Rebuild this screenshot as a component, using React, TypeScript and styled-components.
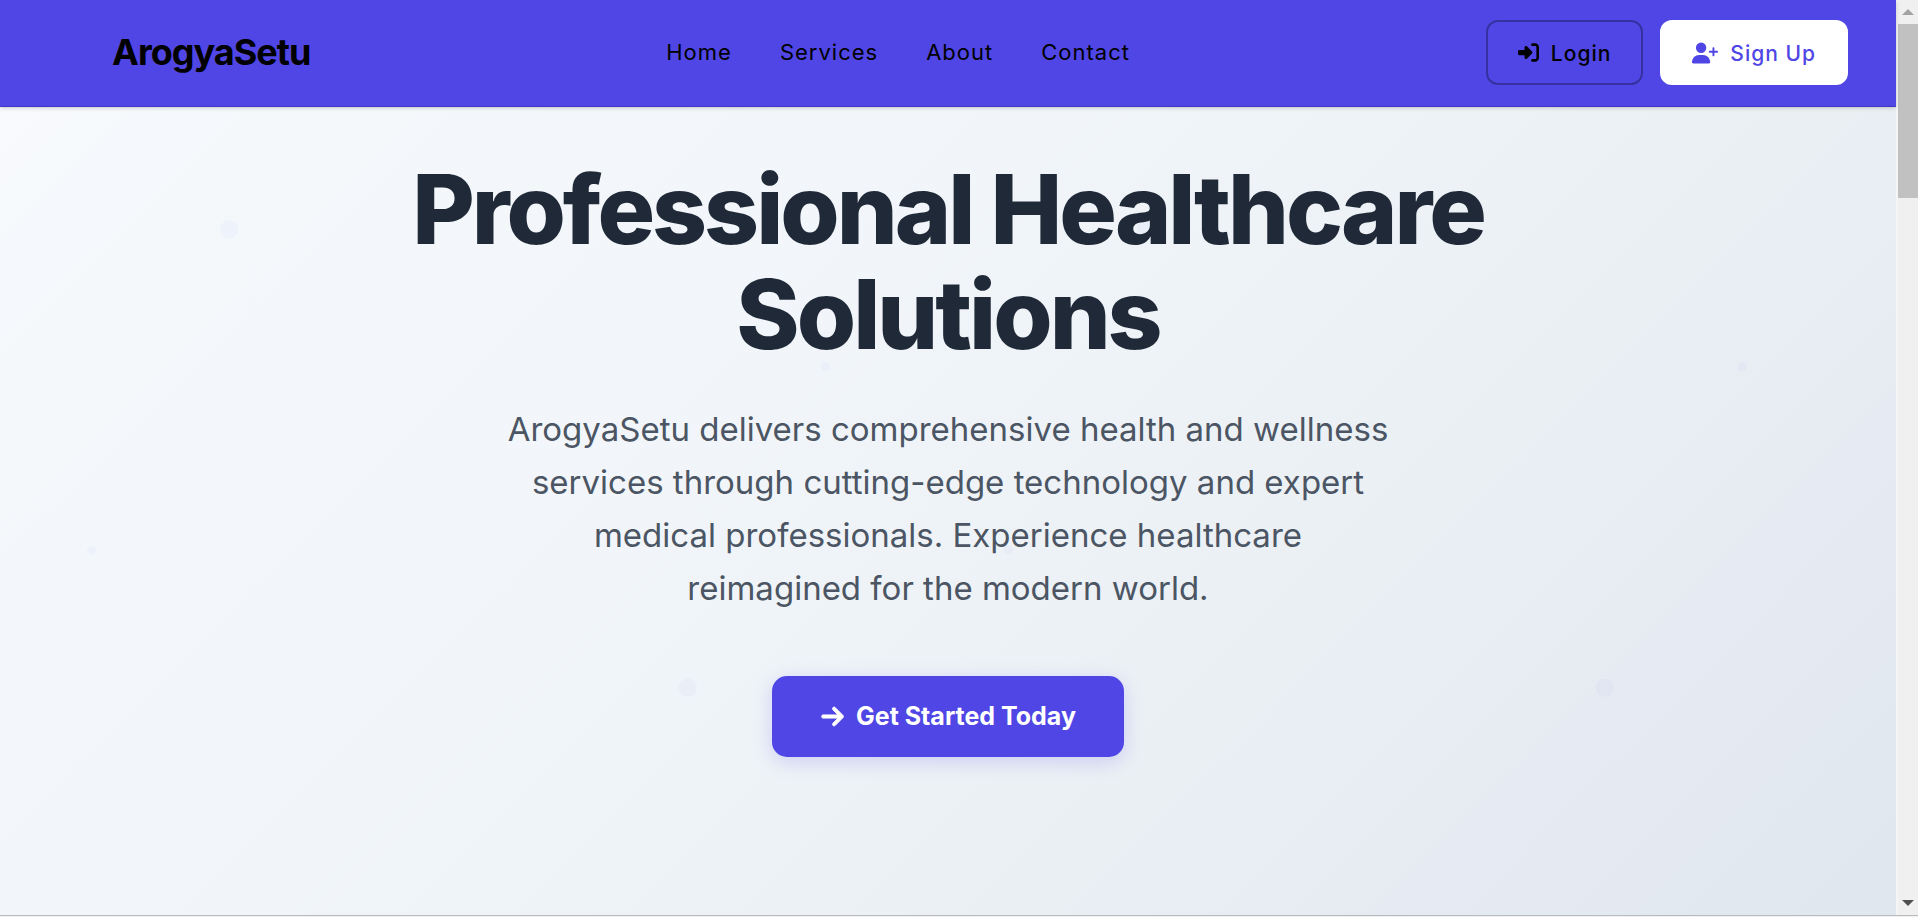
import React from 'react';
import styled, { createGlobalStyle, css } from 'styled-components';
import { FaArrowRight, FaRightToBracket, FaUserPlus } from 'react-icons/fa6';

const GlobalStyle = createGlobalStyle`
  *, *::before, *::after { box-sizing: border-box; }
  body {
    margin: 0;
    background: #f0f0f0;
    font-family: Inter, "Liberation Sans", sans-serif;
    color: #1f2937;
  }
`;

const Window = styled.div`
  display: flex;
  height: calc(100vh - 1px);
  border-bottom: 1px solid #b8bbc0;
  overflow: hidden;
`;

const Page = styled.div`
  position: relative;
  flex: 1;
  min-width: 0;
  display: flex;
  flex-direction: column;
  background: linear-gradient(
    135deg,
    #f9fafe 0%,
    #f4f8fb 15%,
    #f2f6fa 38%,
    #eaeff4 70%,
    #e6ebf3 82%,
    #e0e7ef 100%
  );
`;

const Header = styled.header`
  position: relative;
  z-index: 2;
  display: flex;
  align-items: center;
  justify-content: space-between;
  padding: 20px 48px 21px;
  background: #4f46e5;
  border-bottom: 1px solid #4038c4;
  box-shadow: 0 1px 4px rgba(0, 0, 0, 0.2);
`;

const Logo = styled.a`
  padding: 0 0 2px 64px;
  font-size: 36px;
  line-height: 42px;
  font-weight: 700;
  letter-spacing: -1px;
  color: #000;
  text-decoration: none;
`;

const Nav = styled.nav`
  display: flex;
  gap: 48px;
  padding-bottom: 2px;
`;

const NavLink = styled.a`
  font-size: 22px;
  line-height: 28px;
  letter-spacing: 1px;
  color: #000;
  text-decoration: none;
`;

const Actions = styled.div`
  display: flex;
  gap: 17px;
`;

const AuthButton = styled.button<{ $filled?: boolean }>`
  display: flex;
  align-items: center;
  gap: 12px;
  padding: 17px 30px 15px;
  border: 2px solid rgba(0, 0, 0, 0.3);
  border-radius: 12px;
  background: transparent;
  color: #000;
  font-family: inherit;
  font-size: 21px;
  line-height: 29px;
  font-weight: 500;
  letter-spacing: 1px;
  cursor: pointer;

  svg {
    margin-bottom: 2px;
  }

  ${({ $filled }) =>
    $filled &&
    css`
      background: #fff;
      border-color: #fff;
      color: #4f46e5;
    `}
`;

const Hero = styled.main`
  position: relative;
  z-index: 1;
  flex: 1;
  display: flex;
  flex-direction: column;
  align-items: center;
  padding: 50px 48px;
  text-align: center;
`;

const Title = styled.h1`
  max-width: 1200px;
  margin: 0 0 36px;
  font-size: 96px;
  line-height: 105px;
  font-weight: 800;
  letter-spacing: -3px;
`;

const Lead = styled.p`
  max-width: 885px;
  margin: 0 0 61px;
  font-size: 33px;
  line-height: 53px;
  color: #4b5563;
`;

const StartButton = styled.button`
  display: flex;
  align-items: center;
  gap: 11px;
  padding: 24px 48px;
  border: 0;
  border-radius: 15px;
  background: #4f46e5;
  color: #fff;
  font-family: inherit;
  font-size: 25px;
  line-height: 33px;
  font-weight: 700;
  box-shadow: 0 5px 19px rgba(79, 70, 229, 0.2);
  cursor: pointer;

  svg {
    stroke-width: 20px;
  }
`;

const Dots = styled.div`
  position: absolute;
  inset: 0;
  display: flex;
  overflow: hidden;

  svg {
    flex: none;
    height: 100vh;
    aspect-ratio: 1;
    fill: #4f46e5;
  }
`;

const DotTile = () => (
  <svg viewBox="0 0 100 100">
    <circle cx="25" cy="25" r="1" opacity="0.03" />
    <circle cx="75" cy="75" r="1" opacity="0.03" />
    <circle cx="10" cy="60" r="0.5" opacity="0.03" />
    <circle cx="90" cy="40" r="0.5" opacity="0.03" />
  </svg>
);

const Scrollbar = styled.div`
  flex: none;
  width: 22px;
  display: flex;
  flex-direction: column;
  align-items: center;
  padding: 9px 0;
  border-left: 2px solid #f5f5f5;
  background: #f0f0f0;
`;

const Thumb = styled.div`
  width: 100%;
  height: 174px;
  margin: 9px 0 auto;
  background: #c1c1c1;
`;

const Arrow = styled.svg<{ $color: string }>`
  flex: none;
  width: 12px;
  height: 6px;
  fill: ${({ $color }) => $color};
`;

export default function App() {
  return (
    <>
      <GlobalStyle />
      <Window>
        <Page>
          <Dots aria-hidden="true">
            <DotTile />
            <DotTile />
            <DotTile />
          </Dots>
          <Header>
            <Logo href="#home">ArogyaSetu</Logo>
            <Nav aria-label="Main">
              <NavLink href="#home">Home</NavLink>
              <NavLink href="#services">Services</NavLink>
              <NavLink href="#about">About</NavLink>
              <NavLink href="#contact">Contact</NavLink>
            </Nav>
            <Actions>
              <AuthButton type="button">
                <FaRightToBracket aria-hidden="true" />
                Login
              </AuthButton>
              <AuthButton type="button" $filled>
                <FaUserPlus aria-hidden="true" size={26} />
                Sign Up
              </AuthButton>
            </Actions>
          </Header>
          <Hero>
            <Title>Professional Healthcare Solutions</Title>
            <Lead>
              ArogyaSetu delivers comprehensive health and wellness services through cutting-edge
              technology and expert medical professionals. Experience healthcare reimagined for the
              modern world.
            </Lead>
            <StartButton type="button">
              <FaArrowRight aria-hidden="true" />
              Get Started Today
            </StartButton>
          </Hero>
        </Page>
        <Scrollbar aria-hidden="true">
          <Arrow $color="#a3a3a3" viewBox="0 0 12 6">
            <path d="M0 6 6 0l6 6z" />
          </Arrow>
          <Thumb />
          <Arrow $color="#505050" viewBox="0 0 12 6">
            <path d="M0 0h12L6 6z" />
          </Arrow>
        </Scrollbar>
      </Window>
    </>
  );
}
